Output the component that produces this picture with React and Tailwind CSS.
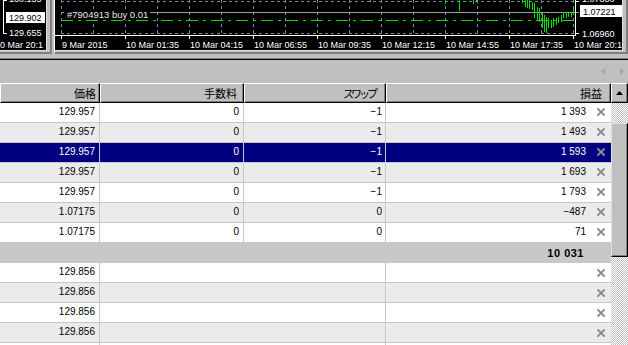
import React from 'react';

const GRID = '#778899';
const GREEN = '#00e000';
const FONT = "'Liberation Sans', Arial, sans-serif";

const times = ['9 Mar 2015', '10 Mar 01:35', '10 Mar 04:15', '10 Mar 06:55', '10 Mar 09:35', '10 Mar 12:15', '10 Mar 14:55', '10 Mar 17:35', '10 Mar 20:15'];

// green bars: page x, top, bottom
const bars = [
  [370, 0, 2], [445, 0, 4], [459, 0, 11], [473, 0, 4], [476, 0, 2],
  [522, 0, 3], [525, 0, 7], [527, 0, 8], [529, 0, 9], [532, 2, 10], [534, 3, 18],
  [537, 7, 20], [539, 8, 22], [542, 13, 28], [544, 15, 32], [546, 17, 33], [548, 18, 28],
  [551, 20, 28], [553, 18, 27], [556, 18, 25], [558, 17, 23], [561, 15, 22], [563, 12, 18],
  [566, 12, 18], [568, 12, 17], [571, 12, 17], [573, 8, 15],
];

const topRows = [
  { price: '129.957', fee: '0', swap: '−1', profit: '1 393' },
  { price: '129.957', fee: '0', swap: '−1', profit: '1 493', alt: true },
  { price: '129.957', fee: '0', swap: '−1', profit: '1 593', selected: true },
  { price: '129.957', fee: '0', swap: '−1', profit: '1 693', alt: true },
  { price: '129.957', fee: '0', swap: '−1', profit: '1 793' },
  { price: '1.07175', fee: '0', swap: '0', profit: '−487', alt: true },
  { price: '1.07175', fee: '0', swap: '0', profit: '71' },
];

const pendingRows = [false, true, false, true, false];

function LeftChart() {
  return (
    <svg width="46" height="50" className="block" fontFamily={FONT} fontSize="9" shapeRendering="crispEdges">
      <line x1="3.5" y1="0" x2="3.5" y2="34" stroke="#fff" />
      <line x1="3" y1="0.5" x2="7" y2="0.5" stroke="#fff" />
      <line x1="3" y1="33.5" x2="7" y2="33.5" stroke="#fff" />
      <text x="9" y="2" fill="#fff">130.155</text>
      <rect x="6" y="12" width="39" height="11" fill="#fff" />
      <text x="9" y="21" fill="#000">129.902</text>
      <text x="9" y="36" fill="#fff">129.655</text>
      <text x="0" y="48" fill="#fff">0 Mar 20:1</text>
    </svg>
  );
}

function MainChart() {
  const ox = 55;
  return (
    <svg width="567" height="50" className="block" fontFamily={FONT} fontSize="9" shapeRendering="crispEdges">
      {Array.from({ length: 17 }, (_, i) => (
        <line key={i} x1={6.5 + i * 32} y1="0" x2={6.5 + i * 32} y2="34" stroke={GRID} strokeDasharray="3 3" />
      ))}
      <line x1="6" y1="1.5" x2="520" y2="1.5" stroke={GRID} strokeDasharray="3 3" />
      <line x1="6" y1="33.5" x2="520" y2="33.5" stroke={GRID} strokeDasharray="3 3" />
      <line x1="6" y1="12.5" x2="524" y2="12.5" stroke="#a0a0a0" />
      <line x1="6" y1="20.5" x2="519" y2="20.5" stroke={GREEN} strokeDasharray="12 5 3 5" />
      {bars.map(([x, a, b], i) => (
        <line key={'b' + i} x1={x - ox + 0.5} y1={a} x2={x - ox + 0.5} y2={b} stroke={GREEN} />
      ))}
      <rect x="9" y="10" width="86" height="10" fill="#000" />
      <text x="12" y="18" fill="#e8e8e8" fontSize="9.5">#7904913 buy 0.01</text>

      {/* axes */}
      <line x1="520.5" y1="0" x2="520.5" y2="36" stroke="#fff" />
      <line x1="0" y1="35.5" x2="521" y2="35.5" stroke="#fff" />
      <line x1="520" y1="1.5" x2="524" y2="1.5" stroke="#fff" />
      <line x1="520" y1="33.5" x2="524" y2="33.5" stroke="#fff" />
      {times.map((t, i) => (
        <g key={t}>
          <line x1={6.5 + i * 64} y1="35" x2={6.5 + i * 64} y2="39" stroke="#fff" />
          <text x={7 + i * 64} y="48" fill="#fff">{t}</text>
        </g>
      ))}

      {/* price scale */}
      <text x="527" y="2" fill="#fff">1.07330</text>
      <rect x="525" y="5" width="42" height="12" fill="#fff" />
      <text x="528" y="15" fill="#000">1.07221</text>
      <text x="527" y="37" fill="#fff">1.06960</text>
    </svg>
  );
}

function CloseIcon() {
  return (
    <svg width="8" height="8" viewBox="0 0 8 8" className="shrink-0">
      <path d="M1 1L7 7M7 1L1 7" stroke="#8c8c8c" strokeWidth="1.9" strokeLinecap="square" />
    </svg>
  );
}

function HeaderCell({ w, pad, children, extra }) {
  return (
    <div className={`${w} ${pad} h-full flex items-center justify-end border-t border-l border-t-white border-l-white border-r border-b border-r-black border-b-black shadow-[inset_-1px_-1px_0_#808080]`}>
      <span className={`font-['Noto_Sans_CJK_JP',sans-serif] text-[11px] leading-none text-black ${extra || ''}`}>{children}</span>
    </div>
  );
}

function PositionRow({ price, fee, swap, profit, alt, selected }) {
  const tone = selected ? 'bg-[#000080] text-white' : alt ? 'bg-[#ebebeb] text-black' : 'bg-white text-black';
  return (
    <div className={`flex h-[20px] shrink-0 border-b border-[#c8c8c8] text-[10px] leading-none ${tone}`}>
      <div className="w-[100px] flex items-center justify-end pr-[4px] pb-px border-r border-[#c8c8c8]">{price}</div>
      <div className="w-[144px] flex items-center justify-end pr-[4px] pb-px border-r border-[#c8c8c8]">{fee}</div>
      <div className="w-[142px] flex items-center justify-end pr-[3px] pb-px border-r border-[#c8c8c8]">{swap}</div>
      <div className="w-[225px] flex items-center justify-end pr-[6px] pb-px">
        <span>{profit}</span>
        <span className="ml-[11px] flex"><CloseIcon /></span>
      </div>
    </div>
  );
}

function PendingRow({ alt }) {
  return (
    <div className={`flex h-[20px] shrink-0 border-b border-[#c8c8c8] text-[10px] leading-none text-black ${alt ? 'bg-[#ebebeb]' : 'bg-white'}`}>
      <div className="w-[100px] flex items-center justify-end pr-[4px] pb-px border-r border-[#c8c8c8]">129.856</div>
      <div className="w-[286px] border-r border-[#c8c8c8]" />
      <div className="w-[225px] flex items-center justify-end pr-[6px]">
        <CloseIcon />
      </div>
    </div>
  );
}

function Checker({ className }) {
  return (
    <div className={`bg-[image:repeating-conic-gradient(#c0c0c0_0_25%,#ffffff_0_50%)] bg-[length:2px_2px] ${className}`} />
  );
}

function Scrollbar() {
  return (
    <div className="w-[17px] flex flex-col">
      <div className="h-[20px] shrink-0 flex items-center justify-center bg-[#c0c0c0] border-t border-l border-t-white border-l-white border-r border-b border-r-black border-b-black shadow-[inset_-1px_-1px_0_#808080]">
        <svg width="7" height="4" viewBox="0 0 7 4"><path d="M3.5 0L7 4H0Z" fill="#000" /></svg>
      </div>
      <Checker className="h-[20px] shrink-0" />
      <div className="h-[134px] shrink-0 bg-[#c0c0c0] border-t border-l border-t-[#dfdfdf] border-l-[#dfdfdf] border-r border-b border-r-black border-b-black shadow-[inset_-1px_-1px_0_#808080]" />
      <Checker className="flex-1" />
    </div>
  );
}

export default function App() {
  return (
    <div className="w-[628px] h-[345px] overflow-hidden bg-[#c0c0c0] flex flex-col font-['Liberation_Sans',Arial,sans-serif]">
      {/* chart windows */}
      <div className="flex h-[58px] shrink-0">
        <div className="w-[52px] h-[54px] border-r-2 border-b-2 border-[#808080]">
          <div className="w-[47px] h-[51px] bg-black border-r border-b border-[#dfdfdf] overflow-hidden">
            <LeftChart />
          </div>
        </div>
        <div className="ml-[2px] flex-1 h-[54px] border-l border-r-2 border-b-2 border-l-white border-r-[#808080] border-b-[#808080]">
          <div className="w-[568px] h-[51px] bg-black border-r border-b border-[#dfdfdf] overflow-hidden">
            <MainChart />
          </div>
        </div>
      </div>
      <div className="h-px shrink-0 bg-[#808080]" />
      <div className="h-px shrink-0 bg-black" />

      {/* terminal tab strip */}
      <div className="h-[23px] shrink-0 flex items-center justify-end gap-[15px] pr-[4px]">
        <svg width="4" height="7" viewBox="0 0 4 7"><path d="M4 0V7L0 3.5Z" fill="#a8a8a8" /></svg>
        <svg width="4" height="7" viewBox="0 0 4 7"><path d="M0 0V7L4 3.5Z" fill="#a8a8a8" /></svg>
      </div>

      {/* trade table */}
      <div className="flex flex-1 min-h-0">
        <div className="w-[611px] flex flex-col overflow-hidden">
          <div className="flex h-[20px] shrink-0 bg-[#c0c0c0]">
            <HeaderCell w="w-[100px]" pad="pr-[3px]">価格</HeaderCell>
            <HeaderCell w="w-[144px]" pad="pr-[6px]">手数料</HeaderCell>
            <HeaderCell w="w-[142px]" pad="pr-[10px]" extra="tracking-[-3px]">スワップ</HeaderCell>
            <HeaderCell w="w-[225px]" pad="pr-[8px]">損益</HeaderCell>
          </div>
          {topRows.map((r, i) => (
            <PositionRow key={i} {...r} />
          ))}
          <div className="h-[20px] shrink-0 bg-[#c8c8c8] flex items-center justify-end pr-[27px]">
            <span className="text-[11px] font-bold tracking-[0.5px] leading-none text-black">10 031</span>
          </div>
          {pendingRows.map((alt, i) => (
            <PendingRow key={i} alt={alt} />
          ))}
        </div>
        <Scrollbar />
      </div>
    </div>
  );
}
